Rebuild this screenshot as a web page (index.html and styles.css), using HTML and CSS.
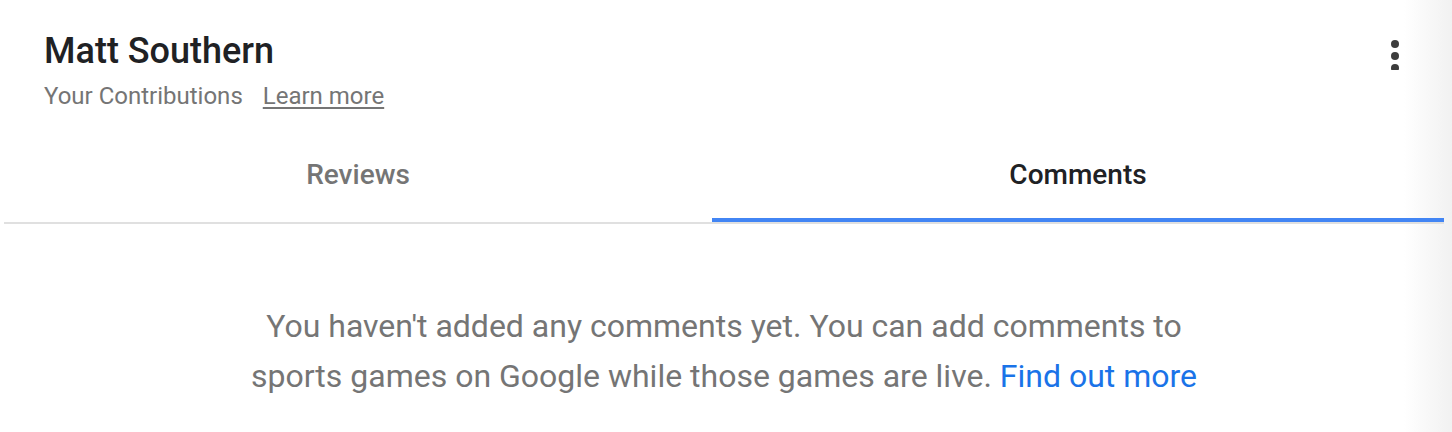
FILE: index.html
```html
<!DOCTYPE html>
<html>

<head>
    <title>Your Contributions</title>
    <link rel="stylesheet" href="styles.css">
</head>

<body>
    <div class="panel">
        <div class="header">
            <div class="header-text">
                <div class="name">Matt Southern</div>
                <div class="subtitle">
                    <span>Your Contributions</span>
                    <a class="learn-more" href="#">Learn more</a>
                </div>
            </div>
            <svg class="menu" width="24" height="36" viewBox="0 0 24 36">
                <circle cx="12" cy="10" r="4" fill="#3c3c3c" />
                <circle cx="12" cy="22" r="4" fill="#3c3c3c" />
                <circle cx="12" cy="34" r="4" fill="#3c3c3c" />
            </svg>
        </div>

        <div class="tabs">
            <div class="tab">Reviews</div>
            <div class="tab active">Comments</div>
        </div>

        <div class="message">
            You haven't added any comments yet. You can add comments to<br>
            sports games on Google while those games are live. <a class="find-out" href="#">Find out more</a>
        </div>
    </div>
</body>

</html>
```

FILE: styles.css
```css
body {
    margin: 0;
    height: 432px;
    overflow: hidden;
    font-family: Roboto, "Noto Sans", sans-serif;
    background: linear-gradient(to right, #fff 1404px, #f1f1f1 1452px);
}

.panel {
    width: 1440px;
    margin-left: 4px;
}

.header {
    display: flex;
    justify-content: space-between;
    align-items: flex-start;
    padding: 30px 37px 30px 40px;
}

.name {
    font-size: 36px;
    line-height: 42px;
    font-weight: 500;
    color: #202124;
}

.subtitle {
    margin-top: 10px;
    font-size: 24px;
    line-height: 28px;
    color: #757575;
    display: flex;
    gap: 20px;
}

.learn-more {
    color: #757575;
    text-decoration: underline;
    text-underline-offset: 3px;
}

.menu {
    margin-top: 4px;
}

.tabs {
    display: grid;
    grid-template-columns: 708px 1fr;
    border-bottom: 2px solid #e0e0e0;
}

.tab {
    text-align: center;
    font-size: 28px;
    line-height: 32px;
    font-weight: 500;
    color: #757575;
    padding: 19px 0 27px;
    border-bottom: 4px solid transparent;
}

.tab.active {
    color: #202124;
    border-bottom-color: #4285f4;
}

.message {
    padding-top: 77px;
    text-align: center;
    font-size: 32px;
    line-height: 50px;
    color: #757575;
}

.find-out {
    color: #1a73e8;
    text-decoration: none;
}
```
